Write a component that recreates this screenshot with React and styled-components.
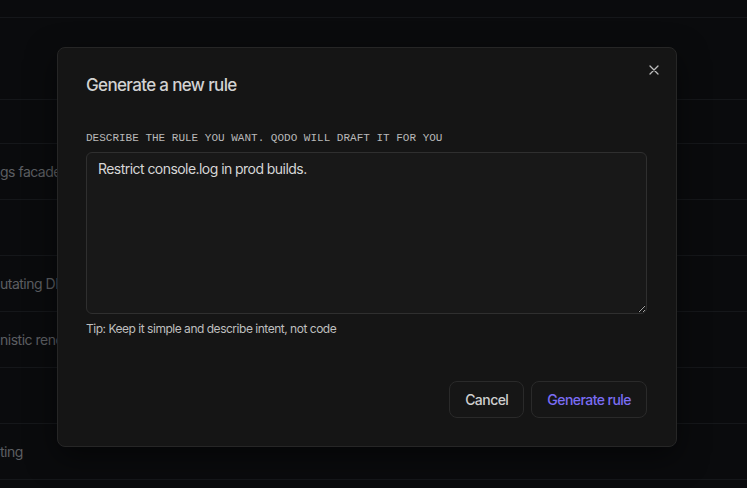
import React from "react";
import styled, { createGlobalStyle } from "styled-components";

const Global = createGlobalStyle`
  html, body { margin: 0; padding: 0; background: #0a0b0d; }
  body { font-family: Inter, "Noto Sans", sans-serif; overflow: hidden; }
  * { box-sizing: border-box; }
`;

const Page = styled.div`
  position: relative;
  width: 747px;
  height: 488px;
  background: #0a0b0d;
  overflow: hidden;
`;

const TopStrip = styled.div`
  height: 18px;
  border-bottom: 1px solid #15171a;
`;

const Header = styled.div`
  height: 82px;
  border-bottom: 1px solid #15171a;
`;

const Row = styled.div`
  height: ${(p) => p.$h || 56}px;
  border-bottom: 1px solid #15171a;
  display: flex;
  align-items: center;
  font-size: 14px;
  letter-spacing: -0.5px;
  color: #5c5e62;
  white-space: nowrap;
`;

const Modal = styled.div`
  position: absolute;
  left: 57px;
  top: 47px;
  width: 620px;
  height: 400px;
  background: #151515;
  border: 1px solid #262626;
  border-radius: 8px;
  padding: 25px 29px 28px 28px;
  display: flex;
  flex-direction: column;
  box-shadow: 0 10px 30px rgba(0, 0, 0, 0.5);
`;

const Close = styled.button`
  position: absolute;
  top: 12px;
  right: 12px;
  width: 20px;
  height: 20px;
  padding: 0;
  border: none;
  background: transparent;
  color: #bdbdbd;
  display: flex;
  align-items: center;
  justify-content: center;
  cursor: pointer;
`;

const Title = styled.h2`
  margin: 0;
  font-size: 17px;
  line-height: 24px;
  font-weight: 500;
  color: #d2d2d2;
  letter-spacing: -0.65px;
`;

const Label = styled.div`
  margin-top: 33px;
  font-family: "Liberation Mono", "DejaVu Sans Mono", monospace;
  font-size: 11px;
  line-height: 16px;
  color: #b9b9b9;
`;

const Area = styled.textarea`
  margin-top: 6px;
  width: 100%;
  height: 162px;
  resize: vertical;
  background: #181818;
  border: 1px solid #2f2f2f;
  border-radius: 6px;
  padding: 6px 11px;
  font-family: Inter, "Noto Sans", sans-serif;
  font-size: 14px;
  line-height: 20px;
  letter-spacing: -0.55px;
  color: #d6d6d6;
  outline: none;
`;

const Tip = styled.div`
  margin-top: 7px;
  font-size: 12px;
  line-height: 16px;
  letter-spacing: -0.48px;
  color: #bfbfbf;
`;

const Actions = styled.div`
  margin-top: auto;
  display: flex;
  justify-content: flex-end;
  gap: 7px;
`;

const Button = styled.button`
  height: 37px;
  padding: 0 15px;
  border-radius: 8px;
  border: 1px solid #2a2a2a;
  background: #161616;
  color: ${(p) => (p.$primary ? "#7b6df4" : "#cfcfcf")};
  font-family: Inter, "Noto Sans", sans-serif;
  font-size: 14px;
  font-weight: 500;
  letter-spacing: -0.55px;
  cursor: pointer;
`;

export default function App() {
  return (
    <>
      <Global />
      <Page>
        <TopStrip />
        <Header />
        <Row $h={44} />
        <Row>gs facade</Row>
        <Row />
        <Row>utating DI</Row>
        <Row>nistic rend</Row>
        <Row />
        <Row>ting</Row>
        <Modal>
          <Close aria-label="Close">
            <svg width="10" height="10" viewBox="0 0 10 10" fill="none">
              <path d="M1 1L9 9M9 1L1 9" stroke="currentColor" strokeWidth="1.3" strokeLinecap="round" />
            </svg>
          </Close>
          <Title>Generate a new rule</Title>
          <Label>DESCRIBE THE RULE YOU WANT. QODO WILL DRAFT IT FOR YOU</Label>
          <Area defaultValue="Restrict console.log in prod builds." />
          <Tip>Tip: Keep it simple and describe intent, not code</Tip>
          <Actions>
            <Button>Cancel</Button>
            <Button $primary>Generate rule</Button>
          </Actions>
        </Modal>
      </Page>
    </>
  );
}
